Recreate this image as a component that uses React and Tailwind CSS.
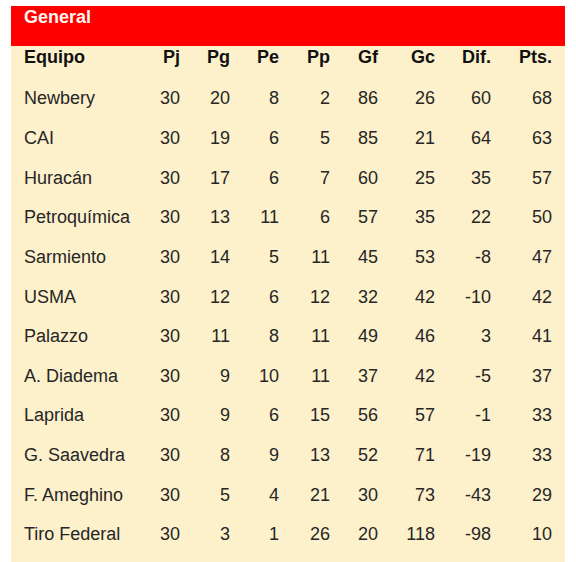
const HEADERS = ['Equipo', 'Pj', 'Pg', 'Pe', 'Pp', 'Gf', 'Gc', 'Dif.', 'Pts.'];

const ROWS = [
  ['Newbery', 30, 20, 8, 2, 86, 26, 60, 68],
  ['CAI', 30, 19, 6, 5, 85, 21, 64, 63],
  ['Huracán', 30, 17, 6, 7, 60, 25, 35, 57],
  ['Petroquímica', 30, 13, 11, 6, 57, 35, 22, 50],
  ['Sarmiento', 30, 14, 5, 11, 45, 53, -8, 47],
  ['USMA', 30, 12, 6, 12, 32, 42, -10, 42],
  ['Palazzo', 30, 11, 8, 11, 49, 46, 3, 41],
  ['A. Diadema', 30, 9, 10, 11, 37, 42, -5, 37],
  ['Laprida', 30, 9, 6, 15, 56, 57, -1, 33],
  ['G. Saavedra', 30, 8, 9, 13, 52, 71, -19, 33],
  ['F. Ameghino', 30, 5, 4, 21, 30, 73, -43, 29],
  ['Tiro Federal', 30, 3, 1, 26, 20, 118, -98, 10],
];

const GRID = 'grid grid-cols-[116px_40px_50px_49px_51px_48px_57px_56px_61px]';

export default function App() {
  return (
    <div className="w-[576px] h-[562px] bg-white pt-[6px] px-[11px] font-['Liberation_Sans',Arial,sans-serif] text-[18px] leading-[21px]">
      <div className="w-[554px] h-[556px] bg-[#fdf1cc] flex flex-col">
        <div className="h-[40px] bg-[#ff0000] pt-[1px] px-[13px]">
          <span className="font-bold text-[#fff6f0]">General</span>
        </div>
        <div className={`${GRID} h-[33px] pt-[1px] px-[13px] font-bold text-[#111]`}>
          {HEADERS.map((h, i) => (
            <div key={h} className={i === 0 ? 'text-left' : 'text-right'}>
              {h}
            </div>
          ))}
        </div>
        {ROWS.map((r) => (
          <div key={r[0]} className={`${GRID} h-[39.65px] items-center px-[13px] text-[#262626]`}>
            {r.map((v, i) => (
              <div key={i} className={i === 0 ? 'text-left whitespace-nowrap' : 'text-right'}>
                {v}
              </div>
            ))}
          </div>
        ))}
      </div>
    </div>
  );
}
